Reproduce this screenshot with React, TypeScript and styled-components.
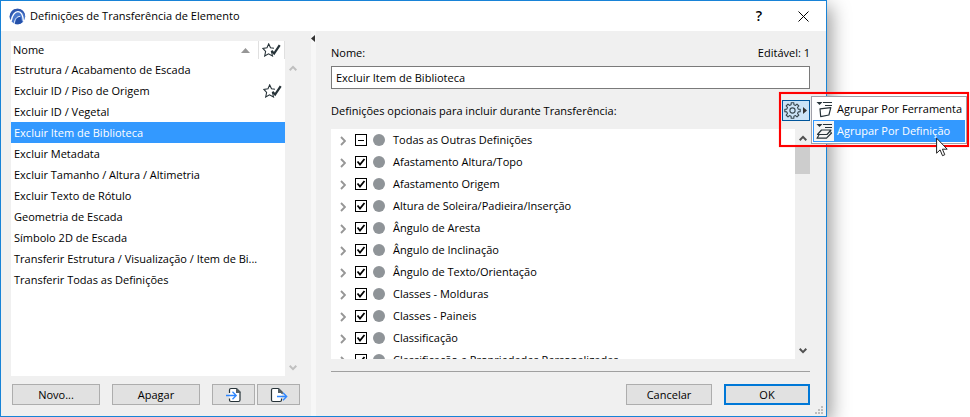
import React, { useEffect, useRef, useState } from 'react';
import styled, { createGlobalStyle, css } from 'styled-components';

const GlobalStyle = createGlobalStyle`
  * { box-sizing: border-box; }
  body {
    margin: 0;
    background: #fff;
    color: #000;
    font-family: "Open Sans", "Noto Sans", sans-serif;
    font-size: 11px;
    line-height: 16px;
    overflow: hidden;
  }
  button, input { font: inherit; color: inherit; }
`;

const Desktop = styled.main`
  display: flex;
  height: 100vh;
  padding-right: 143px;
`;

const Window = styled.section`
  flex: 1;
  min-width: 0;
  display: flex;
  flex-direction: column;
  background: #f0f0f0;
  border: 1px solid #1883d7;
  box-shadow: 4px 6px 18px rgba(0, 0, 0, 0.4);
`;

const TitleBar = styled.header`
  display: flex;
  align-items: center;
  height: 30px;
  padding: 0 11px 0 8px;
  gap: 4px;
  background: #fff;
`;

const Title = styled.h1`
  flex: 1;
  margin: 0;
  font-size: 11px;
  font-weight: 400;
  line-height: 16px;
`;

const CaptionButton = styled.button`
  display: grid;
  place-items: center;
  width: 24px;
  height: 24px;
  margin-left: 16px;
  padding: 0;
  border: 0;
  background: none;
  font-size: 14px;
  font-weight: 600;
`;

const Body = styled.div`
  flex: 1;
  min-height: 0;
  display: flex;
`;

const Pane = styled.div`
  width: 310px;
  display: flex;
  flex-direction: column;
  padding: 10px 11px 11px 10px;
`;

const Splitter = styled.div`
  width: 5px;
  padding-top: 4px;
  background: #f7f7f7;
  svg { display: block; }
`;

const ListFrame = styled.div`
  flex: 1;
  min-height: 0;
  display: flex;
`;

const ListArea = styled.div`
  flex: 1;
  min-width: 0;
  overflow: hidden;
  background: #fff;
`;

const ScrollTrack = styled.div<{ $inset?: boolean }>`
  width: 15px;
  display: flex;
  flex-direction: column;
  align-items: center;
  padding: ${(p) => (p.$inset ? '23px 0 5px' : '5px 0 5px')};
`;

const ScrollButton = styled.button`
  display: block;
  width: 15px;
  height: 8px;
  padding: 0;
  border: 0;
  background: none;
  svg { display: block; margin: 0 auto; }
`;

const Spacer = styled.div`
  flex: 1;
`;

const Thumb = styled.div`
  width: 15px;
  height: 29px;
  margin-top: 3px;
  background: #cdcdcd;
`;

const NameTable = styled.table`
  width: 100%;
  table-layout: fixed;
  border-collapse: collapse;
`;

const HeadCell = styled.th<{ $flag?: boolean }>`
  width: ${(p) => (p.$flag ? '26px' : 'auto')};
  height: 18px;
  padding: ${(p) => (p.$flag ? '0 0 0 3px' : '0 8px 0 2px')};
  border-left: ${(p) => (p.$flag ? '1px solid #e0e0e0' : '0')};
  border-right: ${(p) => (p.$flag ? '1px solid #e0e0e0' : '0')};
  font-weight: 400;
  text-align: left;
  svg { display: block; }
`;

const SortHead = styled.div`
  display: flex;
  align-items: center;
  justify-content: space-between;
`;

const NameRow = styled.tr<{ $selected: boolean }>`
  height: 21px;
  ${(p) => p.$selected && css`
    background: #3399ff;
    color: #fff;
  `}
`;

const NameCell = styled.td`
  padding: 0 0 0 3px;
  overflow: hidden;
  white-space: nowrap;
  text-overflow: ellipsis;
`;

const FlagCell = styled.td`
  padding: 0 0 0 4px;
  svg { display: block; }
`;

const ButtonRow = styled.div`
  display: flex;
  justify-content: space-between;
  padding: 8px 0 0 1px;
`;

const PushButton = styled.button<{ $size?: 'icon' | 'dialog'; $default?: boolean }>`
  display: grid;
  place-items: center;
  width: ${(p) => (p.$size === 'icon' ? '43px' : p.$size === 'dialog' ? '86px' : '88px')};
  height: 21px;
  padding: 0;
  border: ${(p) => (p.$default ? '2px solid #0078d7' : '1px solid #adadad')};
  background: #e1e1e1;
  line-height: 16px;
`;

const IconPair = styled.div`
  display: flex;
  gap: 2px;
`;

const Details = styled.div`
  flex: 1;
  min-width: 0;
  display: flex;
  flex-direction: column;
  padding: 14px 16px 11px 15px;
`;

const FieldHead = styled.div`
  display: flex;
  justify-content: space-between;
  height: 16px;
  margin-bottom: 5px;
`;

const NameInput = styled.input`
  width: 100%;
  height: 23px;
  padding: 0 4px;
  border: 1px solid #7a7a7a;
  background: #fff;
  outline: 0;
`;

const OptionsHead = styled.div`
  display: flex;
  align-items: center;
  justify-content: space-between;
  height: 21px;
  margin: 11px 0 8px;
`;

const MenuAnchor = styled.div`
  position: relative;
`;

const GearButton = styled.button`
  display: flex;
  align-items: center;
  gap: 2px;
  width: 28px;
  height: 21px;
  padding: 0 1px;
  border: 1px solid #00559b;
  background: #cce4f7;
  svg { display: block; flex: none; }
`;

const Menu = styled.div`
  position: absolute;
  top: -4px;
  left: calc(100% + 1px);
  width: 156px;
  padding: 1px;
  border: 1px solid #a0a0a8;
  background: #fff;
  z-index: 2;
`;

const MenuItem = styled.button<{ $active?: boolean }>`
  display: flex;
  align-items: stretch;
  width: 100%;
  height: 22px;
  padding: 0;
  border: 0;
  text-align: left;
  white-space: nowrap;
  line-height: 22px;
  background: ${(p) => (p.$active ? '#3399ff' : '#fff')};
  color: ${(p) => (p.$active ? '#fff' : '#000')};
`;

const MenuIcon = styled.span<{ $active?: boolean }>`
  flex: none;
  display: grid;
  place-items: center;
  width: 21px;
  margin-right: 3px;
  border: 1px solid ${(p) => (p.$active ? '#3399ff' : '#fff')};
  border-right: 0;
  background: ${(p) => (p.$active ? '#f5f5f5' : '#fff')};
  svg { display: block; }
`;

const Callout = styled.div`
  position: absolute;
  top: -8px;
  left: -3px;
  width: 190px;
  height: 55px;
  border: 2px solid #f00;
  box-shadow: 0 0 1px #f88, inset 0 0 1px #f88;
  pointer-events: none;
  z-index: 3;
`;

const Pointer = styled.svg`
  position: absolute;
  top: 37px;
  left: 154px;
  z-index: 4;
`;

const TreeRow = styled.div`
  display: flex;
  align-items: center;
  height: 22px;
  padding-left: 9px;
`;

const Expander = styled.button`
  width: 6px;
  height: 10px;
  margin: 2px 9px 0 0;
  padding: 0;
  border: 0;
  background: none;
  svg { display: block; }
`;

const OptionLabel = styled.label`
  display: flex;
  align-items: center;
  white-space: nowrap;
`;

const BoxStack = styled.span`
  display: grid;
  width: 12px;
  height: 12px;
  margin-right: 6px;
  > * { grid-area: 1 / 1; }
  svg { display: block; z-index: 1; pointer-events: none; }
`;

const BoxInput = styled.input`
  appearance: none;
  width: 12px;
  height: 12px;
  margin: 0;
  border: 1px solid #000;
  background: #fff;
`;

const Dot = styled.span`
  width: 12px;
  height: 12px;
  margin-right: 8px;
  border-radius: 50%;
  background: #8f9498;
`;

const Rule = styled.hr`
  width: 100%;
  height: 1px;
  margin: 12px 0;
  border: 0;
  background: #a0a0a0;
`;

const DialogButtons = styled.div`
  display: flex;
  justify-content: flex-end;
  gap: 12px;
`;

const Grip = styled.svg`
  align-self: flex-end;
  flex: none;
  margin: 0 3px 2px -11px;
`;

const Logo = () => (
  <svg width="17" height="17" viewBox="0 0 17 17" aria-hidden="true">
    <circle cx="8.500" cy="8.500" r="7.700" fill="#4a78cc" />
    <path d="M1.500 12A7.700 7.700 0 0 1 9 .8c4.500.2 7.200 3.700 7.200 8C14.500 4.500 12 3 9 3 5 3 2.300 7 1.500 12Z" fill="#2f57ae" />
    <path d="M2.200 13C3 7 6 3.600 9 3.600c3.300 0 5 3.600 5.400 9.600" fill="none" stroke="#fff" strokeWidth="1.300" />
    <path d="M6 16C6.300 11.500 8.300 9 11.500 9l1.800 5.200C12 15.500 9 17 6 16Z" fill="#2450a8" />
    <path d="M5.300 15.800C5.600 11.300 7.500 8.600 11.200 8.300" fill="none" stroke="#e6eefc" strokeWidth="1" />
  </svg>
);

const StarCheck = () => (
  <svg width="19" height="14" viewBox="0 0 19 14" fill="none" aria-hidden="true">
    <path d="M9.600 9l.9 4-4-2.200-3.800 2.200.9-4.500L.8 5.400l4.200-.6L6.700.9l1.800 3.900 3.500.4" stroke="#263238" strokeWidth="1.100" />
    <path d="M9.400 7.700l2.700 2.800 5.600-8.400" stroke="#263238" strokeWidth="2.200" />
  </svg>
);

const Chevron = ({ up, color }: { up?: boolean; color: string }) => (
  <svg width="8" height="7" viewBox="0 0 8 7" fill="none" aria-hidden="true">
    <path d={up ? 'M.7 5.200L4 1.900l3.300 3.300' : 'M.7 1.800L4 5.100l3.300-3.300'} stroke={color} strokeWidth="2" />
  </svg>
);

const PageArrow = ({ out }: { out?: boolean }) => (
  <svg width="18" height="16" viewBox="0 0 18 16" fill="none" aria-hidden="true">
    {out ? (
      <>
        <path d="M11.500 11.500V13q0 1.500-1.500 1.500H3Q1.500 14.500 1.500 13V3Q1.500 1.500 3 1.500h5.500l3.500 3.500v2" fill="#fff" stroke="#263238" strokeWidth="1.200" />
        <path d="M8 1.500h1l3.500 3.500v1H8Z" fill="#566066" />
        <path d="M7 9.500h10M13 5.800l3.700 3.700-3.700 3.700" stroke="#2e86ff" strokeWidth="1.300" />
      </>
    ) : (
      <>
        <path d="M4.500 6V3Q4.500 1.500 6 1.500h5.500L15 5v8q0 1.500-1.500 1.500H6Q4.500 14.500 4.500 13v-1.500" fill="#fff" stroke="#263238" strokeWidth="1.200" />
        <path d="M11 1.500h1L15.500 5v1H11Z" fill="#566066" />
        <path d="M1 8.500h10M7.500 4.800l3.700 3.700-3.700 3.700" stroke="#2e86ff" strokeWidth="1.300" />
      </>
    )}
  </svg>
);

const gearPath = (() => {
  const pts: string[] = [];
  for (let i = 0; i < 8; i++) {
    const a = (i * Math.PI) / 4 - Math.PI / 2;
    [[-0.24, 5.9], [-0.17, 7.8], [0.17, 7.8], [0.24, 5.9]].forEach(([d, r]) => {
      pts.push(`${(8.5 + r * Math.cos(a + d)).toFixed(2)} ${(8.5 + r * Math.sin(a + d)).toFixed(2)}`);
    });
  }
  return `M${pts.join('L')}Z`;
})();

const Gear = () => (
  <svg width="17" height="17" viewBox="0 0 17 17" fill="none" stroke="#37474f" aria-hidden="true">
    <path d={gearPath} strokeWidth="1.100" strokeLinejoin="round" />
    <circle cx="8.500" cy="8.500" r="2.600" strokeWidth="1.100" />
  </svg>
);

const GroupIcon = ({ layers }: { layers?: boolean }) => (
  <svg width="17" height="17" viewBox="0 0 17 17" fill="none" stroke="#263238" aria-hidden="true">
    <path d="M.5 1h6l-3 3Z" fill="#263238" stroke="none" />
    <path d="M7 1.500h9M9 4.500h7" />
    {layers ? (
      <g strokeLinejoin="round" strokeWidth="1.200">
        <path d="M5.500 7h9.500l-4 4.500H1.500Z" />
        <path d="M3 12L1 15.200h9.500L15.500 10l-1.200-1.500" />
      </g>
    ) : (
      <path d="M4 7.800l10.800-1.200-1.900 7.400-8.200 1.700Z" strokeWidth="1.200" strokeLinejoin="round" />
    )}
  </svg>
);

const names = [
  'Estrutura / Acabamento de Escada',
  'Excluir ID / Piso de Origem',
  'Excluir ID / Vegetal',
  'Excluir Item de Biblioteca',
  'Excluir Metadata',
  'Excluir Tamanho / Altura / Altimetria',
  'Excluir Texto de Rótulo',
  'Geometria de Escada',
  'Símbolo 2D de Escada',
  'Transferir Estrutura / Visualização / Item de Bi...',
  'Transferir Todas as Definições',
];

const options = [
  'Todas as Outras Definições',
  'Afastamento Altura/Topo',
  'Afastamento Origem',
  'Altura de Soleira/Padieira/Inserção',
  'Ângulo de Aresta',
  'Ângulo de Inclinação',
  'Ângulo de Texto/Orientação',
  'Classes - Molduras',
  'Classes - Paineis',
  'Classificação',
  'Classificação e Propriedades Personalizadas',
];

function Option({ label, mixed }: { label: string; mixed: boolean }) {
  const ref = useRef<HTMLInputElement>(null);
  const [checked, setChecked] = useState(!mixed);
  const [partial, setPartial] = useState(mixed);
  useEffect(() => {
    if (ref.current) ref.current.indeterminate = partial;
  }, [partial]);
  return (
    <TreeRow>
      <Expander aria-label={`Expandir ${label}`}>
        <svg width="6" height="10" viewBox="0 0 6 10" fill="none" aria-hidden="true">
          <path d="M1 1l4 4-4 4" stroke="#969696" strokeWidth="1.900" />
        </svg>
      </Expander>
      <OptionLabel>
        <BoxStack>
          <BoxInput
            ref={ref}
            type="checkbox"
            checked={checked}
            onChange={(e) => {
              setPartial(false);
              setChecked(e.target.checked);
            }}
          />
          <svg width="12" height="12" viewBox="0 0 12 12" fill="none" aria-hidden="true">
            {partial && <path d="M3 6.500h6" stroke="#000" />}
            {checked && !partial && <path d="M2.500 5.500L5 8.500l4.500-5.500" stroke="#000" strokeWidth="1.800" />}
          </svg>
        </BoxStack>
        <Dot />
        {label}
      </OptionLabel>
    </TreeRow>
  );
}

export default function App() {
  const [selected, setSelected] = useState(3);
  const [name, setName] = useState(names[3]);
  return (
    <Desktop>
      <GlobalStyle />
      <Window>
        <TitleBar>
          <Logo />
          <Title>Definições de Transferência de Elemento</Title>
          <CaptionButton aria-label="Ajuda">?</CaptionButton>
          <CaptionButton aria-label="Fechar">
            <svg width="11" height="11" viewBox="0 0 11 11" stroke="#000" aria-hidden="true">
              <path d="M.5.5l10 10M10.500.5l-10 10" />
            </svg>
          </CaptionButton>
        </TitleBar>
        <Body>
          <Pane>
            <ListFrame>
              <ListArea>
                <NameTable>
                  <thead>
                    <tr>
                      <HeadCell>
                        <SortHead>
                          Nome
                          <svg width="9" height="5" viewBox="0 0 9 5" aria-hidden="true">
                            <path d="M0 5L4.500 0 9 5Z" fill="#969696" />
                          </svg>
                        </SortHead>
                      </HeadCell>
                      <HeadCell $flag aria-label="Favorito"><StarCheck /></HeadCell>
                    </tr>
                  </thead>
                  <tbody>
                    {names.map((item, i) => (
                      <NameRow
                        key={item}
                        $selected={i === selected}
                        onClick={() => {
                          setSelected(i);
                          setName(item);
                        }}
                      >
                        <NameCell>{item}</NameCell>
                        <FlagCell>{i === 1 && <StarCheck />}</FlagCell>
                      </NameRow>
                    ))}
                  </tbody>
                </NameTable>
              </ListArea>
              <ScrollTrack $inset>
                <ScrollButton aria-label="Rolar para cima"><Chevron up color="#bfbfbf" /></ScrollButton>
                <Spacer />
                <ScrollButton aria-label="Rolar para baixo"><Chevron color="#bfbfbf" /></ScrollButton>
              </ScrollTrack>
            </ListFrame>
            <ButtonRow>
              <PushButton>Novo...</PushButton>
              <PushButton>Apagar</PushButton>
              <IconPair>
                <PushButton $size="icon" aria-label="Importar"><PageArrow /></PushButton>
                <PushButton $size="icon" aria-label="Exportar"><PageArrow out /></PushButton>
              </IconPair>
            </ButtonRow>
          </Pane>
          <Splitter>
            <svg width="4" height="7" viewBox="0 0 4 7" aria-hidden="true">
              <path d="M4 0v7L0 3.500Z" fill="#333" />
            </svg>
          </Splitter>
          <Details>
            <FieldHead>
              <label htmlFor="nome">Nome:</label>
              <span>Editável: 1</span>
            </FieldHead>
            <NameInput id="nome" value={name} onChange={(e) => setName(e.target.value)} />
            <OptionsHead>
              <span>Definições opcionais para incluir durante Transferência:</span>
              <MenuAnchor>
                <GearButton aria-label="Agrupamento" aria-haspopup="menu" aria-expanded="true">
                  <Gear />
                  <svg width="4" height="7" viewBox="0 0 4 7" aria-hidden="true">
                    <path d="M0 0v7l4-3.500Z" fill="#333" />
                  </svg>
                </GearButton>
                <Menu role="menu">
                  <MenuItem role="menuitem">
                    <MenuIcon><GroupIcon /></MenuIcon>
                    Agrupar Por Ferramenta
                  </MenuItem>
                  <MenuItem role="menuitem" $active>
                    <MenuIcon $active><GroupIcon layers /></MenuIcon>
                    Agrupar Por Definição
                  </MenuItem>
                </Menu>
                <Callout />
                <Pointer width="12" height="20" viewBox="0 0 12 20" aria-hidden="true">
                  <path d="M.6 1.200v15l3.500-3.300 2.400 5.800 2.300-1-2.400-5.500h4.800Z" fill="#fff" stroke="#222" />
                </Pointer>
              </MenuAnchor>
            </OptionsHead>
            <ListFrame>
              <ListArea>
                {options.map((label, i) => <Option key={label} label={label} mixed={i === 0} />)}
              </ListArea>
              <ScrollTrack>
                <ScrollButton aria-label="Rolar para cima"><Chevron up color="#505050" /></ScrollButton>
                <Thumb />
                <Spacer />
                <ScrollButton aria-label="Rolar para baixo"><Chevron color="#505050" /></ScrollButton>
              </ScrollTrack>
            </ListFrame>
            <Rule />
            <DialogButtons>
              <PushButton $size="dialog">Cancelar</PushButton>
              <PushButton $size="dialog" $default>OK</PushButton>
            </DialogButtons>
          </Details>
          <Grip width="8" height="8" viewBox="0 0 8 8" fill="#bdbdbd" aria-hidden="true">
            <path d="M6 0h2v2H6ZM3 3h2v2H3ZM6 3h2v2H6ZM0 6h2v2H0ZM3 6h2v2H3ZM6 6h2v2H6Z" />
          </Grip>
        </Body>
      </Window>
    </Desktop>
  );
}
